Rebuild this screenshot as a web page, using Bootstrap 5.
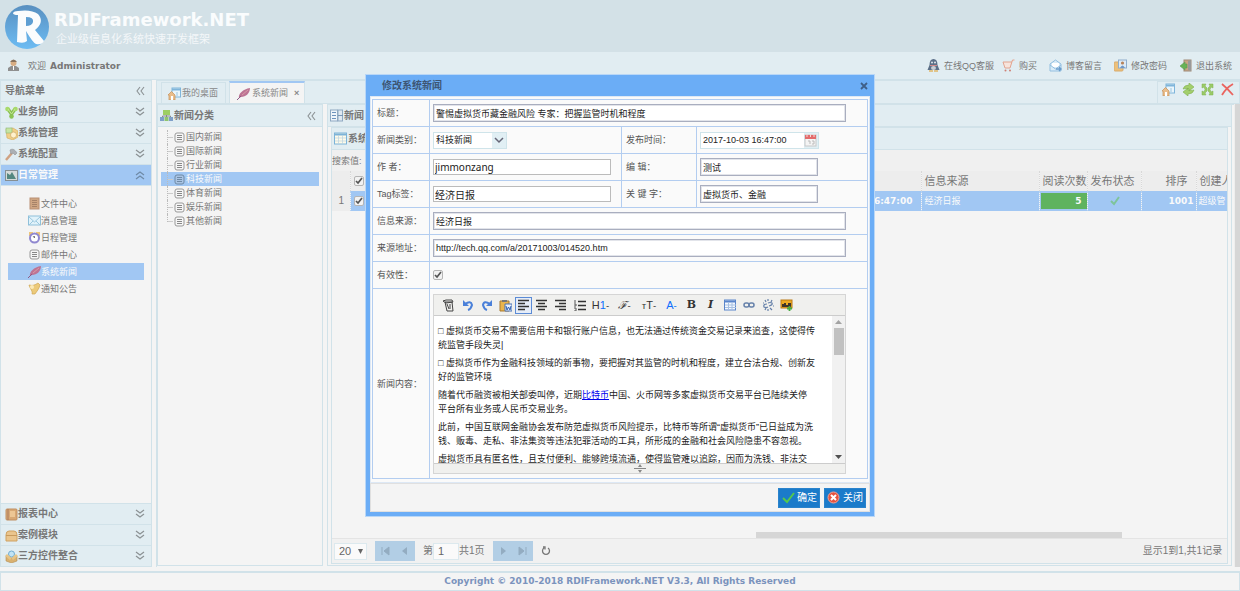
<!DOCTYPE html>
<html lang="zh-CN">
<head>
<meta charset="utf-8">
<meta name="viewport" content="width=device-width, initial-scale=1">
<title>RDIFramework.NET</title>
<link rel="stylesheet" href="https://cdn.jsdelivr.net/npm/bootstrap@5.3.0/dist/css/bootstrap.min.css">
<script src="https://cdn.jsdelivr.net/npm/bootstrap@5.3.0/dist/js/bootstrap.bundle.min.js"></script>
<style>
:root{--bar:#e1edf2;--line:#d1e2e9;--sel:#a1c7f3;--ink:#777}
body{font:9px/14px "Liberation Sans","Noto Sans CJK SC",sans-serif;color:var(--ink);background:#f4f4f4;overflow:hidden}
a{color:inherit;text-decoration:none}
svg{flex:none;display:block}
button{font:inherit;color:inherit}
.ico{width:13px;height:13px}
.page{height:100vh}
.brandbar{height:52px;background:#d3e1e7;color:#fafcfd}
.brandname{font:bold 18px/22px "DejaVu Sans",sans-serif}
.slogan{font-size:11px;line-height:16px;color:#f3f7f9;padding-left:2px}
.userbar{height:28px;background:var(--bar);border-bottom:1px solid var(--line);padding:0 8px 0 7px}
.who{font:bold 9px/14px "DejaVu Sans",sans-serif}
.side{width:152px;border:1px solid var(--line);border-bottom:0}
.fold{height:21px;background:var(--bar);border:0;border-bottom:1px solid var(--line);font-weight:bold;font-size:10px;padding:0 6px 0 4px;text-align:left;width:100%}
.fold.on,.pick{background:var(--sel);color:#fafafa}
.folds-end{border-top:1px solid var(--line)}
.menu{padding:9px 7px}
.menu a{height:17px;padding-left:20px}
.work{border:1px solid var(--line);border-right:0}
.tabbar{height:23px;background:var(--bar);border-bottom:1px solid var(--line);gap:3px}
.tab{height:21px;border:1px solid var(--line);border-bottom:0;padding:0 7px 0 6px;gap:1px;color:#888}
.tab.on{background:#f4f4f4;border-top:2px solid var(--sel);height:22px;padding:0 5px 0 7px;gap:2px}
.tools{width:83px;height:24px;border:1px solid var(--line);padding:1px 5px 0 4px}
.pane{border:1px solid var(--line)}
.inner{margin:0 3px 1px}
.outer{margin-bottom:1px}
.head{height:22px;background:var(--bar);border-bottom:1px solid var(--line);padding:0 6px 0 2px;gap:1px;font-weight:bold;font-size:10px}
.tree{padding:3px}
.tree a{height:14px;padding-left:6px}
.twig{width:6px;height:14px;border-left:1px dotted #bbb;background:linear-gradient(#ccc,#ccc) 0 7px/6px 1px no-repeat}
.last .twig{height:8px;align-self:flex-start}
.search{height:21px;background:#f0f0f0}
.list{table-layout:fixed;width:930px;font-size:11px}
.list th,.list td{height:20px;padding:0 2px 0 3px;border-right:1px dotted #d8d8d8;white-space:nowrap;overflow:hidden;vertical-align:middle}
.list th{background:#ededed;font-weight:normal}
.list td{background:var(--sel);color:#fafafa;font-size:9px;border-color:#b9d3f0}
.list td:last-child{padding-left:2px}
.list td:first-child{background:#ededed;color:var(--ink);font-size:10px}
.list .digits{font:bold 9px/14px "DejaVu Sans",sans-serif}
.reads{background:#5fb35f;margin:0 -2px;padding:1px 5px}
.box{appearance:none;width:10px;height:10px;margin:0;border:1px solid #b5b5b5;border-radius:2px;display:block;background:#f2f2f2 url("data:image/svg+xml,%3Csvg xmlns='http://www.w3.org/2000/svg' viewBox='0 0 8 8'%3E%3Cpath d='M1 4l2 2 4-5' fill='none' stroke='%23555' stroke-width='1.7'/%3E%3C/svg%3E") center/8px no-repeat}
.hbar{height:6px;margin-left:424px;width:366px;background:#d6d6d6}
.vbar{width:6px;margin-left:2px;background:#d6d6d6;border-left:1px solid #eee}
.pager{height:25px;background:#f1f1f1;border-top:1px solid #e4e4e4;padding:0 5px 0 2px;font-size:10px}
.pager select,.pager input{border:1px solid #dce9ee;background:#fafafa;height:17px;color:#666;font-size:11px;padding:0 4px}
.pager select{appearance:none;width:33px;background:#fafafa url("data:image/svg+xml,%3Csvg xmlns='http://www.w3.org/2000/svg' viewBox='0 0 6 6'%3E%3Cpath d='M0 0h6L3 6z' fill='%23666'/%3E%3C/svg%3E") 23px 5px/5px no-repeat}
.pgrp{background:#b2cee5;height:20px;width:40px}
.pgrp button{border:0;background:none;padding:0}
.foot{height:20px;margin-top:4px;border:1px solid var(--line);border-width:2px 1px 1px;font:bold 9px/17px "DejaVu Sans",sans-serif;color:#7b93bd}
.veil{position:fixed;inset:0}
.dlg{width:510px;background:#6badf6;padding:0 4px 4px;border:1px solid #b9d7f7;color:#444}
.dlg-title{height:21px;font-weight:bold;font-size:10px;padding:0 2px 0 12px;color:#3d5573}
.dlg-body{background:#fafafa;border:1px solid #dde8f5;padding:2px 1px 3px}
.form{display:grid;grid-template-columns:57px 192px 75px 1fr;border:1px solid #b3cdf0;border-width:1px 0 0 1px}
.form>*{border:1px solid #b3cdf0;border-width:0 1px 1px 0;min-height:27px;display:flex;align-items:center;padding:0 4px}
.form>label{color:#555}
.form>.cell{padding:0 3px}
.wide{grid-column:2/5}
.tx{border:1px solid #a9aebf;outline:1px solid #e2e4ea;outline-offset:-2px;background:#fff;height:18px;width:118px;padding:0 2px;color:#222;font-size:9px}
.tx.full{width:413px}
.tx.mid{width:178px;height:16px;border-color:#bbb;outline:0;font:10px/14px "Noto Sans","Noto Sans CJK SC",sans-serif;padding:0 1px}
.combo{border:1px solid #cfe4ea;background:#fff;height:17px;width:74px}
.combo>select,.combo>input{appearance:none;border:0;background:none;outline:0;flex:1;min-width:0;height:15px;padding:0 2px;font-size:9px;color:#222}
.combo.when{width:119px}
.combo>span{width:14px;height:15px;background:#e1eff4}
.ed{width:413px;border:1px solid #d5d5d5;background:#fff;margin:5px 0 4px}
.ed-tools{height:21px;background:#f0f0ee;border-bottom:1px solid #ccc;padding:0 5px}
.ed-tools button{border:1px solid transparent;background:none;padding:0;height:17px;width:19px;color:#333;font-size:11px}
.ed-tools .act{border-color:#5b8bd6;background:#e6edf8;width:17px}
.ed-text{height:147px;overflow:hidden;padding:8px 0 0 4px;color:#222;white-space:nowrap}
.ed-text p{margin:0 0 4px}
.ed-text a{color:#00e;text-decoration:underline}
.ed-scroll{width:13px;background:#f1f1f1;padding:4px 1px}
.knob{width:10px;height:27px;background:#c1c1c1}
.ed-foot{height:10px;background:#f0f0ee;border-top:1px solid #ccc}
.dlg-foot{height:29px;background:#f4f4f4;border:1px solid #e0e0e0;padding:0 3px;gap:4px}
.go{background:#1b7bca;color:#fff;border:1px solid #2a83cc;border-radius:0;height:20px;width:42px;font-size:10px;line-height:14px;padding:0 2px}
</style>
</head>
<body>
<svg width="0" height="0" class="position-absolute" aria-hidden="true">
<symbol id="dn" viewBox="0 0 10 10"><path d="M1 1l4 3 4-3M1 5l4 3 4-3" fill="none" stroke="#8b9194" stroke-width="1.2"/></symbol>
<symbol id="up" viewBox="0 0 10 10"><path d="M1 5l4-3 4 3M1 9l4-3 4 3" fill="none" stroke="#6f8aa6" stroke-width="1.2"/></symbol>
<symbol id="lf" viewBox="0 0 10 10"><path d="M5 1L2 5l3 4M9 1L6 5l3 4" fill="none" stroke="#8b9194" stroke-width="1.1"/></symbol>
<symbol id="page" viewBox="0 0 13 13"><rect x="2" y="2" width="9" height="9" rx="2" fill="#f6f6f6" stroke="#999"/><path d="M4 4.500h5M4 6.500h5M4 8.500h5" stroke="#888"/></symbol>
<symbol id="pageon" viewBox="0 0 13 13"><rect x="2" y="2" width="9" height="9" rx="2" fill="#a9c4e4" stroke="#6f8aa6"/><path d="M4 4.500h5M4 6.500h5M4 8.500h5" stroke="#6f8aa6"/></symbol>
<symbol id="quill" viewBox="0 0 13 13"><path d="M2 11c-1-4 4-9 11-10 0 5-4 9-9 9z" fill="#bd7494"/><path d="M0 13L4 9" stroke="#8d5a86"/><path d="M5 8l6-5" stroke="#d99aa5"/></symbol>
<symbol id="home" viewBox="0 0 13 13"><rect x="4" y="1" width="8.500" height="9" fill="#e9f5fb" stroke="#7fb5da"/><path d="M4 2.500h9" stroke="#7fb5da" stroke-width="2"/><path d="M9 5v4" stroke="#9cc6e0"/><path d="M0 8l3.500-3.500L7 8v5H1V8z" fill="#e9bd8b" stroke="#c58f58" stroke-width=".7"/><rect x="3" y="9" width="2" height="4" fill="#fff"/></symbol>
<symbol id="org" viewBox="0 0 13 13"><path d="M6.500 5v3M2.500 9V7h8v2" fill="none" stroke="#888"/><rect x="3" y="1" width="7" height="5" fill="#9dce62"/><rect x="0" y="8" width="4" height="4" fill="#7f9fc9"/><rect x="4.500" y="8" width="4" height="4" fill="#8fc46e"/><rect x="9" y="8" width="4" height="4" fill="#7f9fc9"/></symbol>
<symbol id="green" viewBox="0 0 13 13"><path d="M3 3l3.500 5L10 3M6.500 7v4" fill="none" stroke="#8cbf52" stroke-width="3.500"/><circle cx="2.500" cy="3" r="2.300" fill="#a8da6b"/><circle cx="10.500" cy="3" r="2.300" fill="#a8da6b"/><circle cx="6.500" cy="10.500" r="2.200" fill="#8cc453"/><path d="M3 3l3.500 5L10 3" fill="none" stroke="#c3e894"/></symbol>
<symbol id="cube" viewBox="0 0 13 13"><path d="M1 2l7-1 5 3v6l-5 3-6-2z" fill="#f0cf87" stroke="#d2a95d" stroke-width=".6"/><rect x="1" y="1" width="6" height="5" fill="#c6e5a3" stroke="#8db672" stroke-width=".6"/><circle cx="8.500" cy="8" r="3" fill="#fff1cd" stroke="#c8a25b" stroke-width=".6"/></symbol>
<symbol id="hammer" viewBox="0 0 13 13"><path d="M1 12l6-7" stroke="#d0a282" stroke-width="2.500"/><path d="M5 2c3-2 5 0 7 3l-2 2-2-2-2 1z" fill="#acb0b4" stroke="#8e9296" stroke-width=".6"/></symbol>
<symbol id="chart" viewBox="0 0 13 13"><rect x=".5" y="1.500" width="12" height="10" fill="#d5dad9" stroke="#868f93"/><path d="M2 10V4l3 2 2-3 4 7z" fill="#54877f"/></symbol>
<symbol id="book" viewBox="0 0 13 13"><rect x="1" y="1" width="11" height="11" rx="1" fill="#d8a874" stroke="#c08f63"/><path d="M3 1v11" stroke="#a9795a"/><rect x="5" y="3" width="5" height="6" fill="#edc694"/></symbol>
<symbol id="ledger" viewBox="0 0 13 13"><rect x="2" y="1" width="9" height="11" fill="#cfa683" stroke="#b99074"/><path d="M4 3.500h5M4 5.500h5M4 7.500h5M4 9.500h5" stroke="#9c7961" stroke-width=".8"/></symbol>
<symbol id="mail" viewBox="0 0 13 13"><rect x=".5" y="2" width="12" height="9" fill="#e1f2fa" stroke="#8fc0da"/><path d="M1 3l5.500 5L12 3M1 11l4-4M12 11L8 7" fill="none" stroke="#9cc8df"/></symbol>
<symbol id="clock" viewBox="0 0 13 13"><rect x="1" y="1" width="4" height="4" fill="#edc57a"/><rect x="8" y="1" width="4" height="4" fill="#edc57a"/><circle cx="6.500" cy="7" r="4.500" fill="#fff" stroke="#8f87cf" stroke-width="2"/><path d="M5 5l1.500 2V5" fill="none" stroke="#666" stroke-width=".8"/></symbol>
<symbol id="horn" viewBox="0 0 13 13"><path d="M1 3c4 1 6 0 9-2l2 2c-1 4-3 6-5 9H4c1-3-2-5-3-9z" fill="#ecca7a" stroke="#cfa654" stroke-width=".7"/><circle cx="4" cy="5" r="2" fill="#fbe9b8"/></symbol>
<symbol id="chest" viewBox="0 0 13 13"><path d="M1 6q0-4 3-4h5q3 0 3 4v6H1z" fill="#eac58d" stroke="#cfa263"/><path d="M1 6.500h11" stroke="#c79a5c"/></symbol>
<symbol id="carton" viewBox="0 0 13 13"><path d="M1 6l5.500 2L12 6v5l-5.500 2L1 11z" fill="#d9b170" stroke="#b68e54" stroke-width=".6"/><circle cx="6.500" cy="4" r="3" fill="#c0e3f5" stroke="#72acd0"/><path d="M0 6l2-2 4.500 4L5 10zM13 6l-2-2-4.500 4L8 10z" fill="#e6c487"/></symbol>
<symbol id="form" viewBox="0 0 13 13"><rect x=".5" y="1" width="7" height="11" fill="#eef4fa" stroke="#8fa9c2"/><path d="M2 3.500h4M2 6.500h4M2 9.500h4" stroke="#6c92bd"/><rect x="8" y="1" width="4.500" height="11" fill="#dfe8f1" stroke="#8fa9c2"/><path d="M8 6.500h5" stroke="#7896b5"/></symbol>
<symbol id="grid" viewBox="0 0 13 13"><rect x=".5" y="1" width="12" height="11" fill="#fffbe9" stroke="#7cb3d8"/><path d="M1 2.500h11" stroke="#7cb3d8" stroke-width="2"/><path d="M1 6h11M1 9h11M4.500 3v9M8.500 3v9" stroke="#b9d3e3" stroke-width=".7"/></symbol>
<symbol id="man" viewBox="0 0 13 13"><path d="M1 12V9l3-2h5l3 2v3z" fill="#8f8f8f"/><circle cx="6.500" cy="4" r="3" fill="#d8ad83"/><path d="M3 3q3.500-5 7 0z" fill="#88735e"/><path d="M6.500 7v4" stroke="#fff"/></symbol>
<symbol id="qq" viewBox="0 0 13 13"><path d="M2.500 6q0-6 4-6t4 6l2 5h-12z" fill="#5b6f87"/><ellipse cx="6.500" cy="9" rx="2.500" ry="2" fill="#c9ced4"/><path d="M3 6.500h7" stroke="#cd8587"/><path d="M2 12h4M7 12h4" stroke="#dfb668" stroke-width="1.500"/><circle cx="5" cy="3.500" r="1" fill="#dfe6ec"/><circle cx="8" cy="3.500" r="1" fill="#dfe6ec"/></symbol>
<symbol id="cart" viewBox="0 0 13 13"><path d="M12.500 1h-2L8 9H3L1 3h9" fill="#f7e4dc" stroke="#e2a490"/><circle cx="3.500" cy="11.500" r="1" fill="#ce8175"/><circle cx="8" cy="11.500" r="1" fill="#ce8175"/></symbol>
<symbol id="blog" viewBox="0 0 13 13"><path d="M1 5l5.500-4L12 5v7H1z" fill="#d9ecf8" stroke="#93bfe0"/><path d="M3 4h7v4H3z" fill="#fff"/><path d="M1 6l5.500 4L12 6" fill="none" stroke="#93bfe0"/><path d="M7 10h5M10 8l2 2-2 2" fill="none" stroke="#6a9ccc" stroke-width="1.300"/></symbol>
<symbol id="pass" viewBox="0 0 13 13"><rect x="0" y="3" width="9" height="9" rx="1" fill="#ecc07b" stroke="#d8ab6c"/><rect x="4.500" y="1" width="8" height="8" fill="#deebf6" stroke="#8fadcc"/><circle cx="8.500" cy="4" r="1.600" fill="#b78259"/><path d="M6 9q2.500-5 5 0z" fill="#6f97c7"/></symbol>
<symbol id="exit" viewBox="0 0 13 13"><rect x="5" y="1" width="7" height="11" fill="#c9a583" stroke="#a08a76"/><path d="M9 2l3-1v11l-3-1z" fill="#999"/><path d="M6 3v2h2v4H6v2L1 7z" fill="#67b255" stroke="#5a9d52" stroke-width=".6"/></symbol>
<symbol id="sync" viewBox="0 0 13 13"><path d="M1 6q1-4 6-4V0l5 4-5 4V6Q4 5 1 6zM12 7q-1 4-6 4v2L1 9l5-4v2q3 1 6 0z" fill="#a3cf6c" stroke="#7fb04f" stroke-width=".6"/></symbol>
<symbol id="max" viewBox="0 0 13 13"><path d="M1 1h4L4 3l2 2v3l-2 2 1 2H1V8l2 1 1-2.500L3 4 1 5zM12 1H8l1 2-2 2v3l2 2-1 2h4V8l-2 1-1-2.500L10 4l2 1z" fill="#9bcb67" stroke="#7fb04f" stroke-width=".5"/></symbol>
<symbol id="redx" viewBox="0 0 13 13"><path d="M1 1q5 4 11 11M12 1Q5 5 1 12" fill="none" stroke="#ea645f" stroke-width="1.800"/></symbol>
</svg>

<div class="page d-flex flex-column">
  <header>
    <div class="brandbar d-flex align-items-center ps-1 pt-1">
      <svg width="46" height="46" viewBox="0 0 46 46" role="img" aria-label="R"><defs><linearGradient id="lg" x2="0" y2="1"><stop stop-color="#588fc0"/><stop offset="1" stop-color="#6dbcf3"/></linearGradient></defs><circle cx="23" cy="22" r="22" fill="url(#lg)"/><path d="M9 8Q10 6 14 6 27 4 34 9q7 8-3 16l9 11q-2 4-8 3-3-1-10-13l1 10q-3 3-10 1l1-27q-5 0-5-2z" fill="#fbfcfd"/><path d="M22 12q8 0 7 5-1 4-7 4z" fill="#5e9ed2"/></svg>
      <div class="ms-1"><div class="brandname">RDIFramework.NET</div><div class="slogan">企业级信息化系统快速开发框架</div></div>
    </div>
    <div class="userbar d-flex align-items-center justify-content-between">
      <div class="d-flex align-items-center"><svg class="ico me-2"><use href="#man"/></svg><span class="me-1">欢迎</span><span class="who">Administrator</span></div>
      <nav class="d-flex gap-2">
        <a href="#" class="d-flex align-items-center"><svg class="ico me-1"><use href="#qq"/></svg>在线QQ客服</a>
        <a href="#" class="d-flex align-items-center"><svg class="ico me-1"><use href="#cart"/></svg>购买</a>
        <a href="#" class="d-flex align-items-center ms-1"><svg class="ico me-1"><use href="#blog"/></svg>博客留言</a>
        <a href="#" class="d-flex align-items-center ms-1"><svg class="ico me-1"><use href="#pass"/></svg>修改密码</a>
        <a href="#" class="d-flex align-items-center ms-1"><svg class="ico me-1"><use href="#exit"/></svg>退出系统</a>
      </nav>
    </div>
  </header>

  <div class="d-flex flex-fill gap-1" style="min-height:0">
    <aside class="side d-flex flex-column flex-shrink-0">
      <div class="fold d-flex align-items-center justify-content-between">导航菜单<svg width="10" height="10"><use href="#lf"/></svg></div>
      <button class="fold d-flex align-items-center"><svg class="ico"><use href="#green"/></svg><span class="flex-fill">业务协同</span><svg width="10" height="10"><use href="#dn"/></svg></button>
      <button class="fold d-flex align-items-center"><svg class="ico"><use href="#cube"/></svg><span class="flex-fill">系统管理</span><svg width="10" height="10"><use href="#dn"/></svg></button>
      <button class="fold d-flex align-items-center"><svg class="ico"><use href="#hammer"/></svg><span class="flex-fill">系统配置</span><svg width="10" height="10"><use href="#dn"/></svg></button>
      <button class="fold on d-flex align-items-center"><svg class="ico"><use href="#chart"/></svg><span class="flex-fill">日常管理</span><svg width="10" height="10"><use href="#up"/></svg></button>
      <nav class="menu flex-fill">
        <a href="#" class="d-flex align-items-center"><svg class="ico"><use href="#ledger"/></svg>文件中心</a>
        <a href="#" class="d-flex align-items-center"><svg class="ico"><use href="#mail"/></svg>消息管理</a>
        <a href="#" class="d-flex align-items-center"><svg class="ico"><use href="#clock"/></svg>日程管理</a>
        <a href="#" class="d-flex align-items-center"><svg class="ico"><use href="#page"/></svg>邮件中心</a>
        <a href="#" class="d-flex align-items-center pick"><svg class="ico"><use href="#quill"/></svg>系统新闻</a>
        <a href="#" class="d-flex align-items-center"><svg class="ico"><use href="#horn"/></svg>通知公告</a>
      </nav>
      <div class="folds-end">
        <button class="fold d-flex align-items-center"><svg class="ico"><use href="#book"/></svg><span class="flex-fill">报表中心</span><svg width="10" height="10"><use href="#dn"/></svg></button>
        <button class="fold d-flex align-items-center"><svg class="ico"><use href="#chest"/></svg><span class="flex-fill">案例模块</span><svg width="10" height="10"><use href="#dn"/></svg></button>
        <button class="fold d-flex align-items-center"><svg class="ico"><use href="#carton"/></svg><span class="flex-fill">三方控件整合</span><svg width="10" height="10"><use href="#dn"/></svg></button>
      </div>
    </aside>

    <main class="work flex-fill d-flex flex-column border-bottom-0" style="min-width:0">
      <div class="tabbar d-flex align-items-end ps-1">
        <a href="#" class="tab d-flex align-items-center"><svg class="ico"><use href="#home"/></svg>我的桌面</a>
        <a href="#" class="tab on d-flex align-items-center"><svg class="ico"><use href="#quill"/></svg>系统新闻<b class="ms-1">×</b></a>
        <div class="tools ms-auto d-flex justify-content-between align-items-start align-self-start">
          <button class="border-0 bg-transparent p-0" aria-label="home"><svg class="ico"><use href="#home"/></svg></button>
          <button class="border-0 bg-transparent p-0" aria-label="refresh"><svg class="ico"><use href="#sync"/></svg></button>
          <button class="border-0 bg-transparent p-0" aria-label="expand"><svg class="ico"><use href="#max"/></svg></button>
          <button class="border-0 bg-transparent p-0" aria-label="close"><svg class="ico"><use href="#redx"/></svg></button>
        </div>
      </div>
      <div class="d-flex flex-fill" style="min-height:0">
        <section class="pane outer flex-shrink-0 me-1" style="width:166px">
          <div class="head d-flex align-items-center"><svg class="ico"><use href="#org"/></svg><span class="flex-fill">新闻分类</span><svg width="10" height="10"><use href="#lf"/></svg></div>
          <nav class="tree">
            <a href="#" class="d-flex align-items-center"><span class="twig"></span><svg class="ico"><use href="#page"/></svg>国内新闻</a>
            <a href="#" class="d-flex align-items-center"><span class="twig"></span><svg class="ico"><use href="#page"/></svg>国际新闻</a>
            <a href="#" class="d-flex align-items-center"><span class="twig"></span><svg class="ico"><use href="#page"/></svg>行业新闻</a>
            <a href="#" class="d-flex align-items-center pick"><span class="twig"></span><svg class="ico"><use href="#pageon"/></svg>科技新闻</a>
            <a href="#" class="d-flex align-items-center"><span class="twig"></span><svg class="ico"><use href="#page"/></svg>体育新闻</a>
            <a href="#" class="d-flex align-items-center"><span class="twig"></span><svg class="ico"><use href="#page"/></svg>娱乐新闻</a>
            <a href="#" class="d-flex align-items-center last"><span class="twig"></span><svg class="ico"><use href="#page"/></svg>其他新闻</a>
          </nav>
        </section>
        <section class="pane outer flex-fill d-flex flex-column" style="min-width:0">
          <div class="head d-flex align-items-center"><svg class="ico"><use href="#form"/></svg>新闻</div>
          <div class="pane inner flex-fill d-flex flex-column overflow-hidden">
            <div class="head d-flex align-items-center"><svg class="ico"><use href="#grid"/></svg>系统</div>
            <div class="search d-flex align-items-center">搜索值:</div>
            <table class="list">
              <colgroup><col style="width:18px"><col style="width:22px"><col style="width:390px"><col style="width:159px"><col style="width:118px"><col style="width:48px"><col style="width:54px"><col style="width:55px"><col style="width:66px"></colgroup>
              <thead><tr><th></th><th><input type="checkbox" class="box" checked aria-label="全选"></th><th></th><th></th><th>信息来源</th><th>阅读次数</th><th>发布状态</th><th class="text-end pe-2">排序</th><th>创建人</th></tr></thead>
              <tbody><tr><td class="text-center">1</td><td><input type="checkbox" class="box" checked aria-label="1"></td><td></td><td class="digits text-end pe-2">2017-10-03 16:47:00</td><td>经济日报</td><td class="digits text-end"><div class="reads">5</div></td><td><svg class="m-auto" width="10" height="10" viewBox="0 0 10 10"><path d="M1 5l3 3 5-7" fill="none" stroke="#7ec49a" stroke-width="2"/></svg></td><td class="digits text-end">1001</td><td>超级管</td></tr></tbody>
            </table>
            <div class="mt-auto hbar"></div>
            <div class="pager d-flex align-items-center">
              <select aria-label="每页"><option>20</option></select>
              <div class="pgrp d-flex align-items-center justify-content-around ms-2"><button aria-label="first"><svg width="10" height="10"><path d="M2 1v8M9 1L4 5l5 4z" fill="#93acc1" stroke="#93acc1"/></svg></button><button aria-label="prev"><svg width="10" height="10"><path d="M7 1L2 5l5 4z" fill="#93acc1"/></svg></button></div>
              <label for="pg" class="ms-2">第</label><input id="pg" value="1" style="width:26px"><span>共1页</span>
              <div class="pgrp d-flex align-items-center justify-content-around ms-2"><button aria-label="next"><svg width="10" height="10"><path d="M3 1l5 4-5 4z" fill="#93acc1"/></svg></button><button aria-label="last"><svg width="10" height="10"><path d="M8 1v8M1 1l5 4-5 4z" fill="#93acc1" stroke="#93acc1"/></svg></button></div>
              <button class="border-0 bg-transparent p-0 ms-2" aria-label="reload"><svg width="10" height="10" viewBox="0 0 10 10"><path d="M3 2a3.500 3.500 0 1 0 4 0M2 1l2 0 0 2.500" fill="none" stroke="#777" stroke-width="1.300"/></svg></button>
              <span class="ms-auto">显示1到1,共1记录</span>
            </div>
          </div>
        </section>
        <div class="vbar"></div>
      </div>
    </main>
  </div>
  <footer class="foot text-center">Copyright © 2010-2018 RDIFramework.NET V3.3, All Rights Reserved</footer>
</div>

<div class="veil d-flex align-items-center justify-content-center">
  <div class="dlg" role="dialog" aria-labelledby="dt">
    <div class="dlg-title d-flex align-items-center justify-content-between"><span id="dt">修改系统新闻</span><button class="border-0 bg-transparent p-0" aria-label="close"><svg width="8" height="8"><path d="M1 1l6 6M7 1L1 7" stroke="#3f5f88" stroke-width="1.800"/></svg></button></div>
    <div class="dlg-body">
      <div class="form">
        <label for="f1">标题：</label><div class="cell wide"><input id="f1" class="tx full" value="警惕虚拟货币藏金融风险 专家：把握监管时机和程度"></div>
        <label for="f2">新闻类别：</label><div class="cell"><div class="combo d-flex"><select id="f2"><option>科技新闻</option></select><span class="d-flex align-items-center justify-content-center"><svg width="10" height="8"><path d="M1 2l4 4 4-4" fill="none" stroke="#667" stroke-width="1.500"/></svg></span></div></div>
        <label for="f3">发布时间：</label><div class="cell"><div class="combo when d-flex"><input id="f3" value="2017-10-03 16:47:00"><span><svg width="13" height="14" viewBox="0 0 13 14"><rect x="1" y="2" width="11" height="11" fill="#f4f4f4" stroke="#c8c8c8"/><path d="M1 4h11" stroke="#e36c6c" stroke-width="4"/><path d="M3 1v3M6.500 1v3M10 1v3" stroke="#f6dada"/><path d="M4 8h2v3M8 8h2v3H8" fill="none" stroke="#bbb"/></svg></span></div></div>
        <label for="f4">作 者：</label><div class="cell"><input id="f4" class="tx mid" value="jimmonzang"></div>
        <label for="f5">编 辑：</label><div class="cell"><input id="f5" class="tx" value="测试"></div>
        <label for="f6">Tag标签：</label><div class="cell"><input id="f6" class="tx mid" value="经济日报"></div>
        <label for="f7">关 键 字：</label><div class="cell"><input id="f7" class="tx" value="虚拟货币、金融"></div>
        <label for="f8">信息来源：</label><div class="cell wide"><input id="f8" class="tx full" value="经济日报"></div>
        <label for="f9">来源地址：</label><div class="cell wide"><input id="f9" class="tx full" value="http://tech.qq.com/a/20171003/014520.htm"></div>
        <label for="f10">有效性：</label><div class="cell wide"><input id="f10" type="checkbox" class="box" checked></div>
        <label>新闻内容：</label>
        <div class="cell wide"><div class="ed">
          <div class="ed-tools d-flex align-items-center">
            <button aria-label="clear"><svg class="m-auto" width="13" height="13"><path d="M3 3h7l1 9H5zM1 2l3-1h6l1 2-7 1zM5 5l2 5M8 5v5" fill="none" stroke="#444"/></svg></button>
            <button aria-label="undo"><svg class="m-auto" width="12" height="12"><path d="M3 5q6-4 7 1-1 4-4 5" fill="none" stroke="#4a80d9" stroke-width="2"/><path d="M1 1v6h6z" fill="#4a80d9"/></svg></button>
            <button aria-label="redo"><svg class="m-auto" width="12" height="12"><path d="M9 5Q3 1 2 6q1 4 4 5" fill="none" stroke="#4a80d9" stroke-width="2"/><path d="M11 1v6H5z" fill="#4a80d9"/></svg></button>
            <button aria-label="paste"><svg class="m-auto" width="13" height="13"><path d="M1 2h9v10H1z" fill="#e9b44d" stroke="#a87b31"/><path d="M3 1h5v2H3z" fill="#777"/><path d="M6 5h7v7H6z" fill="#e8f0fb" stroke="#4b72b5"/><path d="M7 7l1 4 1.500-3L11 11l1-4" fill="none" stroke="#2f5fb0"/></svg></button>
            <button class="act" aria-label="left"><svg class="m-auto" width="13" height="12"><path d="M1 1.500h11M1 4.500h7M1 7.500h11M1 10.500h7" stroke="#333" stroke-width="1.500"/></svg></button>
            <button aria-label="center"><svg class="m-auto" width="13" height="12"><path d="M1 1.500h11M3 4.500h7M1 7.500h11M3 10.500h7" stroke="#333" stroke-width="1.500"/></svg></button>
            <button aria-label="right"><svg class="m-auto" width="13" height="12"><path d="M1 1.500h11M5 4.500h7M1 7.500h11M5 10.500h7" stroke="#333" stroke-width="1.500"/></svg></button>
            <button aria-label="list"><svg class="m-auto" width="13" height="12"><path d="M5 2.500h8M5 6.500h8M5 10.500h8" stroke="#333" stroke-width="1.300"/><path d="M2 1v3M1 5h2v2H1M1 9h2v3H1" fill="none" stroke="#555"/></svg></button>
            <button style="width:23px">H<span class="text-primary">1</span><small>-</small></button>
            <button style="width:25px"><i style="font-family:'DejaVu Serif'">ℱ</i><small>-</small></button>
            <button style="width:24px"><small>т</small>T<small>-</small></button>
            <button class="text-primary" style="width:21px">A<small>-</small></button>
            <button style="font:bold 11px/14px 'DejaVu Serif',serif">B</button>
            <button style="font:italic bold 11px/14px 'DejaVu Serif',serif">I</button>
            <button aria-label="table"><svg class="m-auto" width="12" height="12"><rect x=".5" y="1" width="11" height="10" fill="#f3f8ff" stroke="#5a85cb"/><path d="M1 2.500h11" stroke="#5a85cb" stroke-width="2"/><path d="M1 6h11M1 8.500h11M4.500 3v8M8 3v8" stroke="#a7c0e2"/></svg></button>
            <button aria-label="link"><svg class="m-auto" width="12" height="12"><rect x="1" y="4" width="5" height="4" rx="2" fill="none" stroke="#6681aa" stroke-width="1.500"/><rect x="6" y="4" width="5" height="4" rx="2" fill="none" stroke="#6681aa" stroke-width="1.500"/></svg></button>
            <button aria-label="unlink"><svg class="m-auto" width="12" height="12"><path d="M5 5q-4 0-3 3 2 1 4 0M7 7q4-1 3-3-2-1-4 0M3 1l1 2M6 0v2M10 1L9 3M1 4h1M3 11l1-2M6 12v-2M10 11L8 9M11 7h1" fill="none" stroke="#6681aa" stroke-width="1.200"/></svg></button>
            <button aria-label="image"><svg class="m-auto" width="13" height="12"><rect x="1" y="1" width="11" height="8" fill="#edaa22" stroke="#b97815"/><path d="M2 8V5h2V4h2v2h2V4h3v4z" fill="#40352a"/><path d="M9.500 7v5M7 9.500h5" stroke="#4aab43" stroke-width="1.800"/></svg></button>
          </div>
          <div class="d-flex">
            <div class="ed-text flex-fill" contenteditable="true" role="textbox" aria-label="新闻内容">
              <p>□ 虚拟货币交易不需要信用卡和银行账户信息，也无法通过传统资金交易记录来追查，这使得传<br>统监管手段失灵|</p>
              <p>□ 虚拟货币作为金融科技领域的新事物，要把握对其监管的时机和程度，建立合法合规、创新友<br>好的监管环境</p>
              <p>随着代币融资被相关部委叫停，近期<a href="#">比特币</a>中国、火币网等多家虚拟货币交易平台已陆续关停<br>平台所有业务或人民币交易业务。</p>
              <p>此前，中国互联网金融协会发布防范虚拟货币风险提示，比特币等所谓“虚拟货币”已日益成为洗<br>钱、贩毒、走私、非法集资等违法犯罪活动的工具，所形成的金融和社会风险隐患不容忽视。</p>
              <p>虚拟货币具有匿名性，且支付便利、能够跨境流通，使得监管难以追踪，因而为洗钱、非法交</p>
            </div>
            <div class="ed-scroll d-flex flex-column align-items-center"><svg width="7" height="4"><path d="M0 4l3.500-4L7 4z" fill="#a3a3a3"/></svg><div class="knob mt-1"></div><svg class="mt-auto" width="7" height="4"><path d="M0 0h7L3.500 4z" fill="#505050"/></svg></div>
          </div>
          <div class="ed-foot"><svg class="mx-auto" width="12" height="9"><path d="M0 4.500h12" stroke="#888"/><path d="M6 0l2 3H4zM6 9l2-3H4z" fill="#888"/></svg></div>
        </div></div>
      </div>
    </div>
    <div class="dlg-foot d-flex align-items-center justify-content-end">
      <button class="btn go d-flex align-items-center justify-content-between"><svg width="14" height="13"><path d="M2 7l4 4 7-9" fill="none" stroke="#55c94c" stroke-width="2"/></svg>确定</button>
      <button class="btn go d-flex align-items-center justify-content-between"><svg width="13" height="13"><circle cx="6.500" cy="6.500" r="5.500" fill="#e5523e" stroke="#f5a597"/><path d="M4 4l5 5M9 4L4 9" stroke="#fff" stroke-width="2"/></svg>关闭</button>
    </div>
  </div>
</div>
</body>
</html>
